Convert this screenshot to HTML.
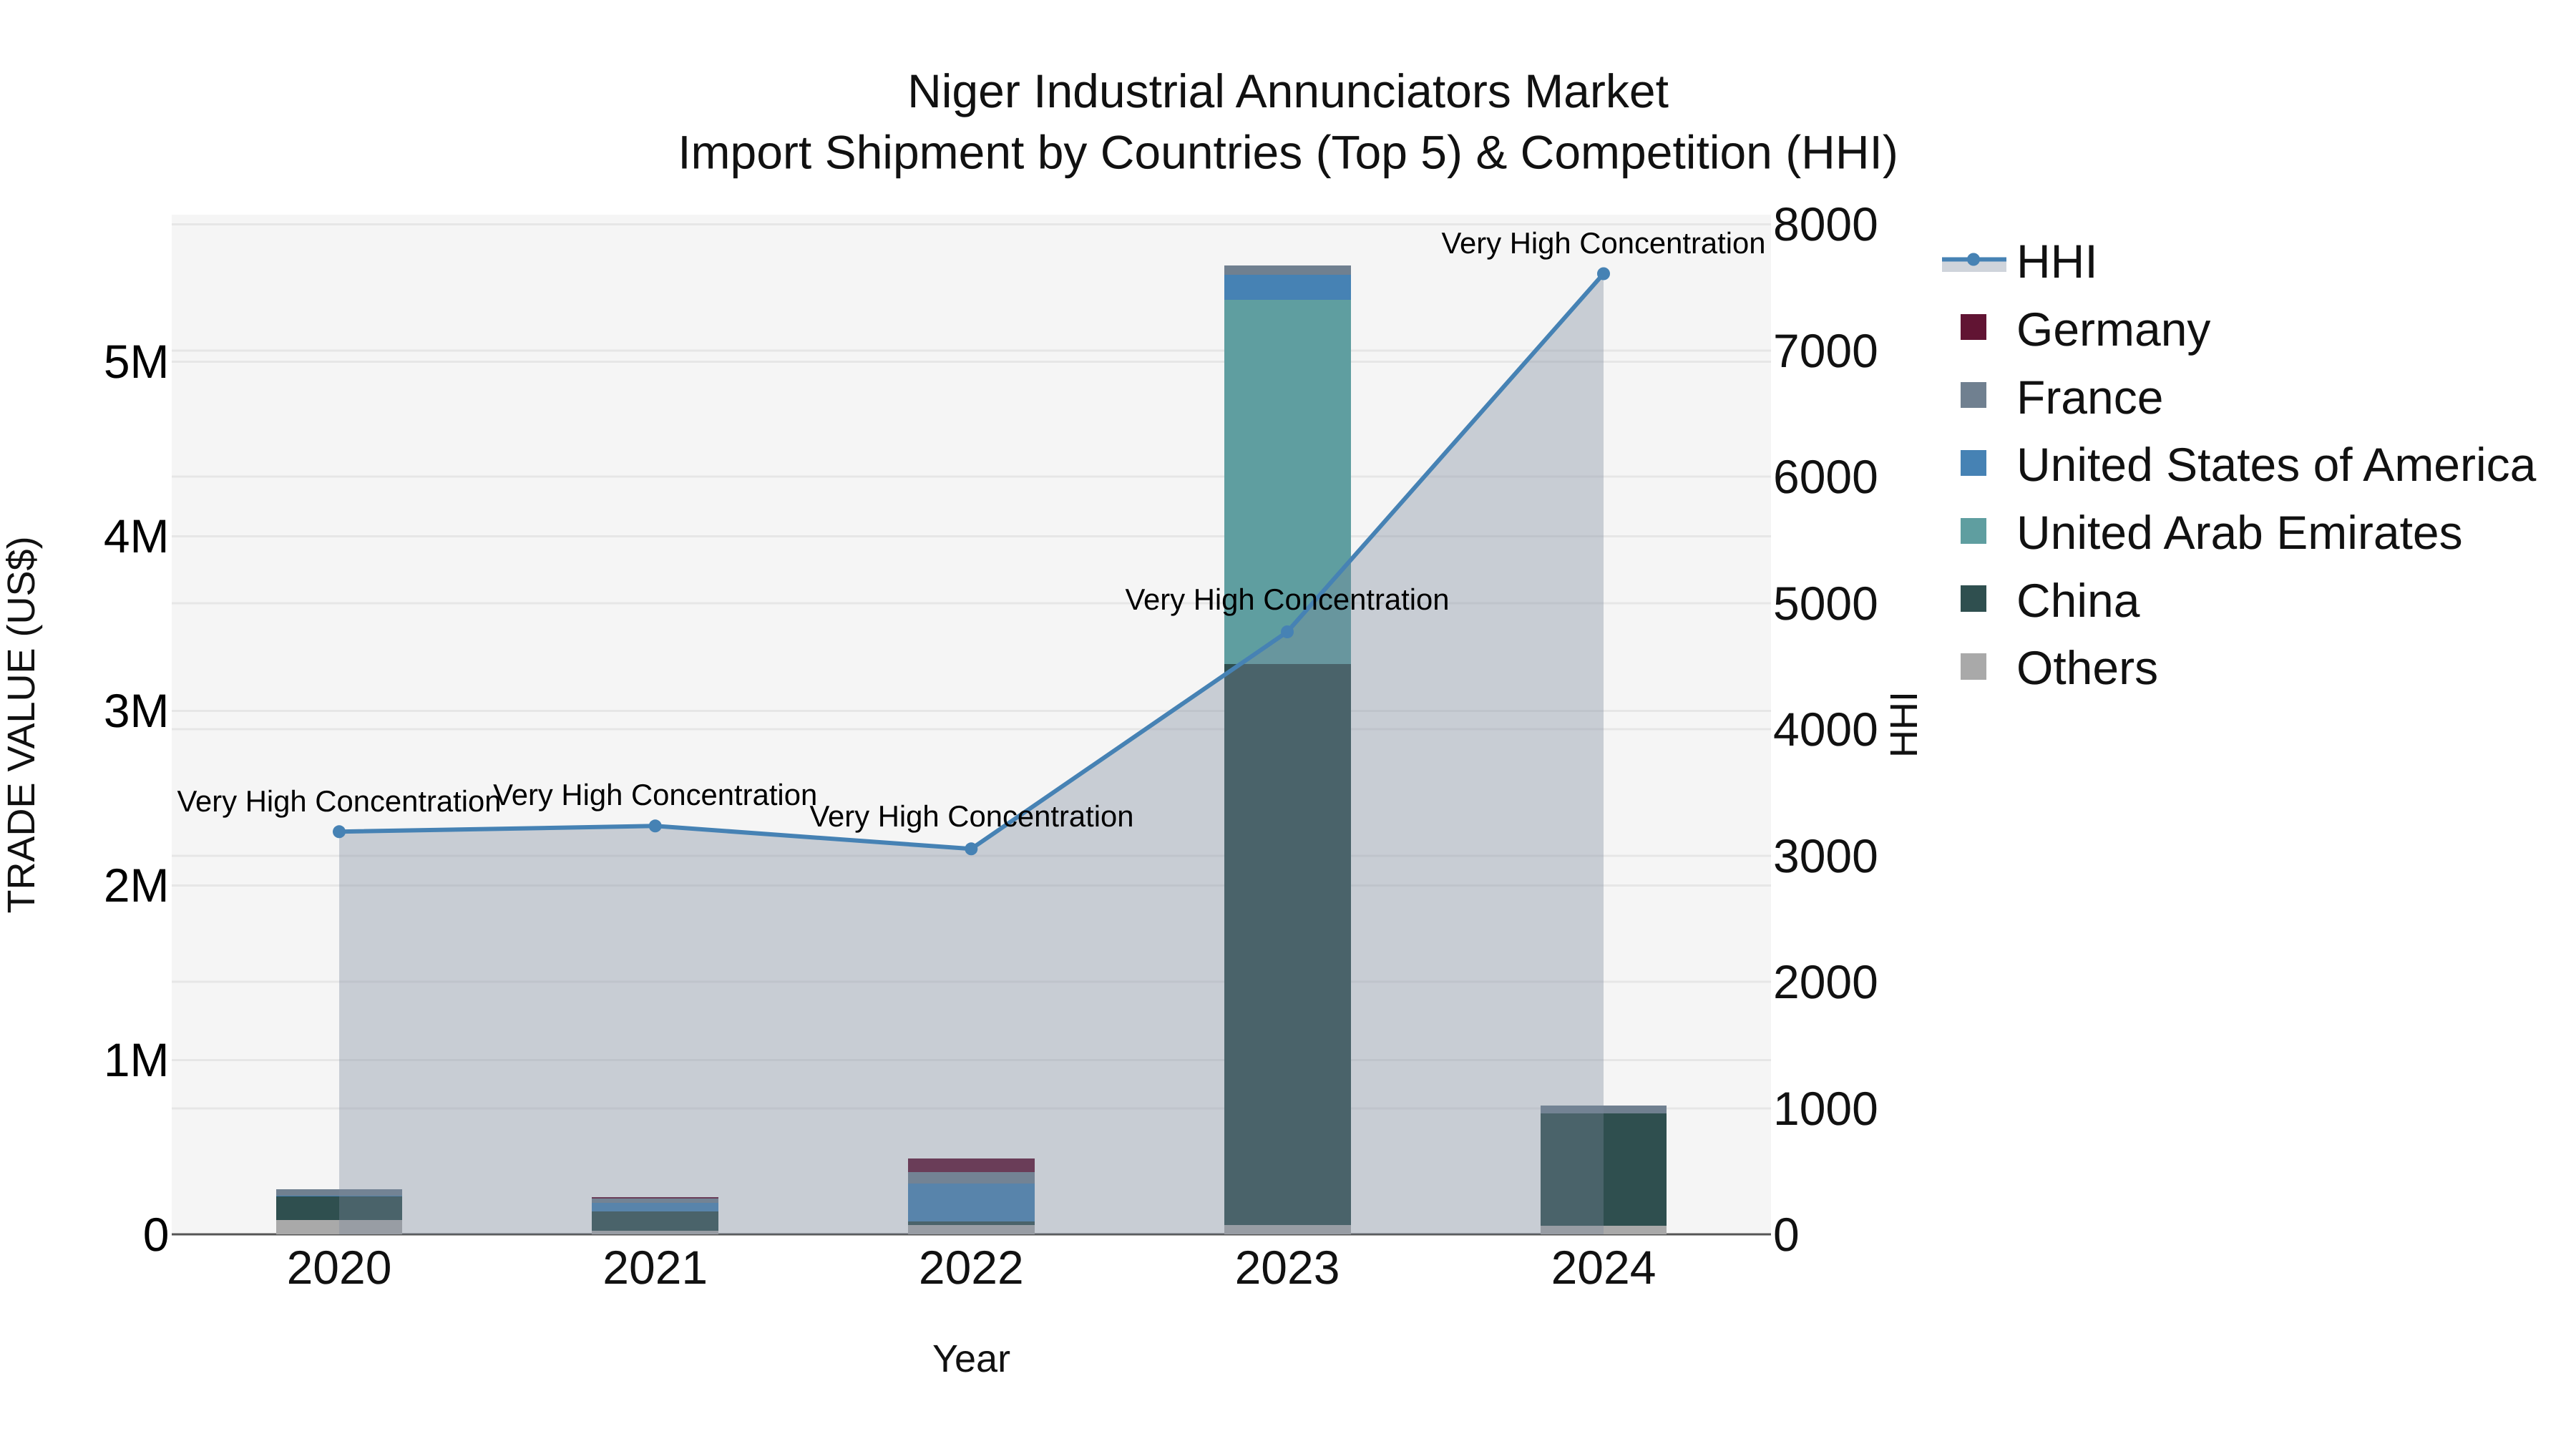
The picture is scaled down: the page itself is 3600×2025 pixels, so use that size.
<!DOCTYPE html>
<html lang="en">
<head>
<meta charset="utf-8">
<title>Niger Industrial Annunciators Market</title>
<style>
html,body{margin:0;padding:0;background:#fff;width:3600px;height:2025px;overflow:hidden}
svg{display:block}
text{font-family:"Liberation Sans",Arial,sans-serif;text-rendering:geometricPrecision}
</style>
</head>
<body>
<svg width="3600" height="2025" viewBox="0 0 3600 2025" xmlns="http://www.w3.org/2000/svg">
<rect width="3600" height="2025" fill="#fff"/>
<!-- plot background -->
<rect x="240" y="300" width="2235" height="1425" fill="#f5f5f5"/>
<!-- grid -->
<g stroke="#e6e6e6" stroke-width="3" fill="none">
<path d="M240 313.5H2475M240 490H2475M240 666H2475M240 843H2475M240 1019H2475M240 1196H2475M240 1372H2475M240 1549H2475"/>
<path d="M240 505.5H2475M240 749.5H2475M240 993.5H2475M240 1237.5H2475M240 1481.5H2475"/>
</g>
<path d="M240 1725H2475" stroke="#555" stroke-width="3"/>
<!-- bars -->
<g shape-rendering="crispEdges">
<!-- 2020 -->
<rect x="386" y="1662" width="176" height="9" fill="#708090"/>
<rect x="386" y="1671" width="176" height="1" fill="#4682b4"/>
<rect x="386" y="1672" width="176" height="33" fill="#2f4f4f"/>
<rect x="386" y="1705" width="176" height="20" fill="#a9a9a9"/>
<!-- 2021 -->
<rect x="827" y="1673" width="177" height="2" fill="#611433"/>
<rect x="827" y="1675" width="177" height="6" fill="#708090"/>
<rect x="827" y="1681" width="177" height="12" fill="#4682b4"/>
<rect x="827" y="1693" width="177" height="27" fill="#2f4f4f"/>
<rect x="827" y="1720" width="177" height="5" fill="#a9a9a9"/>
<!-- 2022 -->
<rect x="1269" y="1619" width="177" height="19" fill="#611433"/>
<rect x="1269" y="1638" width="177" height="16" fill="#708090"/>
<rect x="1269" y="1654" width="177" height="53" fill="#4682b4"/>
<rect x="1269" y="1707" width="177" height="5" fill="#2f4f4f"/>
<rect x="1269" y="1712" width="177" height="13" fill="#a9a9a9"/>
<!-- 2023 -->
<rect x="1711" y="371" width="177" height="13" fill="#708090"/>
<rect x="1711" y="384" width="177" height="35" fill="#4682b4"/>
<rect x="1711" y="419" width="177" height="509" fill="#5f9ea0"/>
<rect x="1711" y="928" width="177" height="784" fill="#2f4f4f"/>
<rect x="1711" y="1712" width="177" height="13" fill="#a9a9a9"/>
<!-- 2024 -->
<rect x="2153" y="1545" width="176" height="11" fill="#708090"/>
<rect x="2153" y="1556" width="176" height="157" fill="#2f4f4f"/>
<rect x="2153" y="1713" width="176" height="12" fill="#a9a9a9"/>
</g>
<!-- HHI area + line -->
<polygon points="474,1162.3 915.7,1154.3 1357.3,1186.3 1799,883 2241,382.5 2241,1725 474,1725" fill="#7a889b" fill-opacity="0.36"/>
<polyline points="474,1162.3 915.7,1154.3 1357.3,1186.3 1799,883 2241,382.5" fill="none" stroke="#4682b4" stroke-width="6" stroke-linejoin="round"/>
<g fill="#4682b4">
<circle cx="474" cy="1162.3" r="9"/><circle cx="915.7" cy="1154.3" r="9"/><circle cx="1357.3" cy="1186.3" r="9"/><circle cx="1799" cy="883" r="9"/><circle cx="2241" cy="382.5" r="9"/>
</g>
<!-- annotations -->
<g font-size="41.8" fill="#000" text-anchor="middle">
<text x="474" y="1134">Very High Concentration</text>
<text x="915.7" y="1125">Very High Concentration</text>
<text x="1358" y="1155">Very High Concentration</text>
<text x="1799" y="852">Very High Concentration</text>
<text x="2241" y="354">Very High Concentration</text>
</g>
<!-- title -->
<g font-size="66" fill="#111" text-anchor="middle">
<text x="1800" y="150">Niger Industrial Annunciators Market</text>
<text x="1800" y="235.7">Import Shipment by Countries (Top 5) &amp; Competition (HHI)</text>
</g>
<!-- left ticks -->
<g font-size="66" fill="#000" text-anchor="end">
<text x="236.5" y="1748">0</text>
<text x="236.5" y="1504">1M</text>
<text x="236.5" y="1260">2M</text>
<text x="236.5" y="1016">3M</text>
<text x="236.5" y="772">4M</text>
<text x="236.5" y="528">5M</text>
</g>
<!-- right ticks -->
<g font-size="66" fill="#111">
<text x="2478" y="1748">0</text>
<text x="2478" y="1572">1000</text>
<text x="2478" y="1395">2000</text>
<text x="2478" y="1219">3000</text>
<text x="2478" y="1042">4000</text>
<text x="2478" y="866">5000</text>
<text x="2478" y="689">6000</text>
<text x="2478" y="513">7000</text>
<text x="2478" y="336">8000</text>
</g>
<!-- x ticks -->
<g font-size="66" fill="#111" text-anchor="middle">
<text x="474" y="1794">2020</text>
<text x="915.7" y="1794">2021</text>
<text x="1357.3" y="1794">2022</text>
<text x="1799" y="1794">2023</text>
<text x="2241" y="1794">2024</text>
</g>
<!-- axis titles -->
<text x="1357.5" y="1917" font-size="54" fill="#111" text-anchor="middle">Year</text>
<text transform="translate(48,1013) rotate(-90)" font-size="54" fill="#111" text-anchor="middle">TRADE VALUE (US$)</text>
<text transform="translate(2679,1012.5) rotate(-90)" font-size="54" fill="#111" text-anchor="middle">HHI</text>
<!-- legend -->
<rect x="2714" y="362" width="90" height="18" fill="#cfd4db"/>
<path d="M2714 362.5H2804" stroke="#4682b4" stroke-width="6"/>
<circle cx="2758" cy="362.5" r="9" fill="#4682b4"/>
<g shape-rendering="crispEdges">
<rect x="2740" y="439" width="36" height="36" fill="#611433"/>
<rect x="2740" y="534" width="36" height="36" fill="#708090"/>
<rect x="2740" y="629" width="36" height="36" fill="#4682b4"/>
<rect x="2740" y="724" width="36" height="36" fill="#5f9ea0"/>
<rect x="2740" y="818" width="36" height="37" fill="#2f4f4f"/>
<rect x="2740" y="913" width="36" height="37" fill="#a9a9a9"/>
</g>
<g font-size="66" fill="#111">
<text x="2818" y="388">HHI</text>
<text x="2818" y="483">Germany</text>
<text x="2818" y="578">France</text>
<text x="2818" y="672">United States of America</text>
<text x="2818" y="767">United Arab Emirates</text>
<text x="2818" y="862">China</text>
<text x="2818" y="956">Others</text>
</g>
</svg>
</body>
</html>
